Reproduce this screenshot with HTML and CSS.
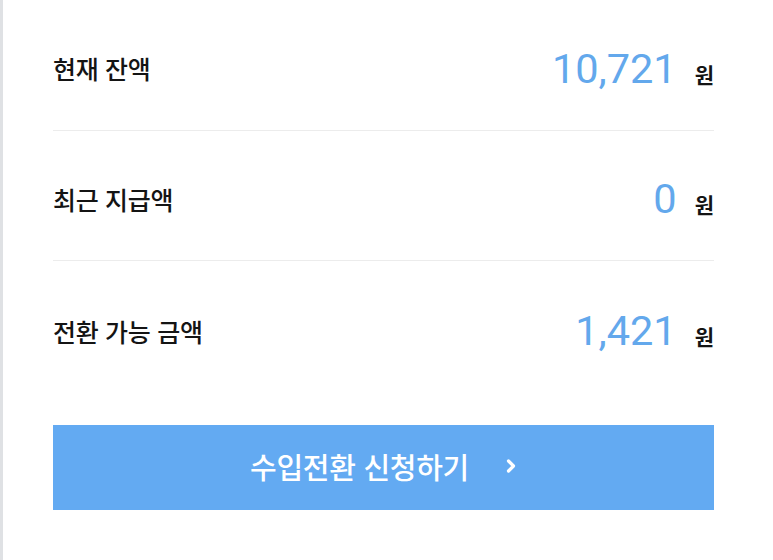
FILE: index.html
```html
<!DOCTYPE html>
<html lang="ko">
<head>
<meta charset="utf-8">
<link rel="stylesheet" href="styles.css">
</head>
<body>
<div class="page">
  <div class="panel">
    <div class="row">
      <span class="label">현재 잔액</span>
      <span class="value"><span class="num">10,721</span><span class="unit">원</span></span>
    </div>
    <div class="row">
      <span class="label">최근 지급액</span>
      <span class="value"><span class="num">0</span><span class="unit">원</span></span>
    </div>
    <div class="row last">
      <span class="label">전환 가능 금액</span>
      <span class="value"><span class="num">1,421</span><span class="unit">원</span></span>
    </div>
    <button class="cta">
      <span class="cta-text">수입전환 신청하기</span>
      <svg class="chev" width="12" height="16" viewBox="0 0 12 16"><path d="M3.5 3 L8.5 8 L3.5 13" fill="none" stroke="#fff" stroke-width="3.2" stroke-linecap="round" stroke-linejoin="round"/></svg>
    </button>
  </div>
</div>
</body>
</html>
```
FILE: styles.css
```css
html, body {
  margin: 0;
  padding: 0;
  background: #fff;
}
.page {
  width: 773px;
  height: 560px;
  border-left: 3px solid #dfe1e4;
  box-sizing: border-box;
  overflow: hidden;
}
.panel {
  padding: 0 59px 0 50px;
  display: flex;
  flex-direction: column;
}
.row {
  height: 130px;
  border-bottom: 1px solid #ececec;
  display: flex;
  align-items: center;
  justify-content: space-between;
  padding-top: 6px;
  box-sizing: border-box;
}
.row:first-child {
  height: 131px;
}
.row.last {
  border-bottom: none;
  height: 164px;
  padding-top: 0;
  align-items: flex-start;
}
.row.last .label { margin-top: 52px; }
.row.last .value { margin-top: 45px; }
.label {
  font-family: "Noto Sans CJK KR", "Noto Sans", sans-serif;
  font-size: 25px;
  font-weight: 500;
  color: #141414;
  letter-spacing: -0.3px;
}
.value {
  display: flex;
  align-items: baseline;
}
.num {
  font-family: Roboto, "Liberation Sans", sans-serif;
  font-size: 41.5px;
  font-weight: 400;
  color: #63a8ec;
}
.unit {
  font-family: "Noto Sans CJK KR", sans-serif;
  font-size: 21px;
  font-weight: 700;
  color: #141414;
  margin-left: 18px;
}
.cta {
  height: 85px;
  width: 100%;
  border: none;
  background: #63aaf2;
  display: flex;
  align-items: center;
  justify-content: center;
  gap: 36px;
  padding: 0 0 4px 0;
  margin: 0;
  cursor: pointer;
}
.cta-text {
  font-family: "Noto Sans CJK KR", sans-serif;
  font-size: 29px;
  font-weight: 500;
  color: #fff;
  letter-spacing: -0.3px;
}
.chev {
  display: block;
}
```
